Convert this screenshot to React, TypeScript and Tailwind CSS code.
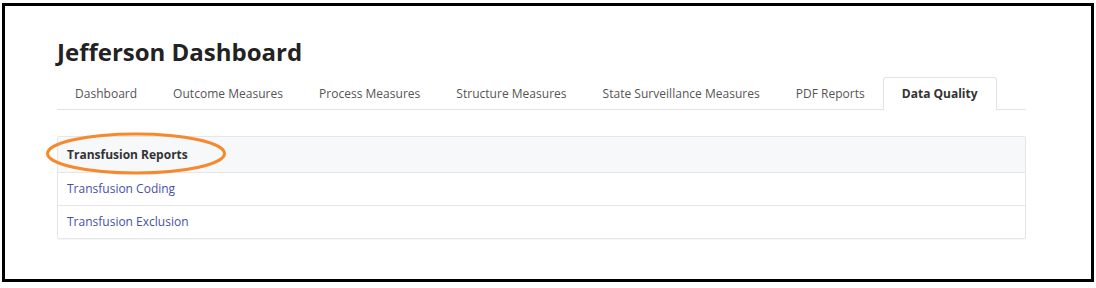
import React from "react";

const tabs = [
  "Dashboard",
  "Outcome Measures",
  "Process Measures",
  "Structure Measures",
  "State Surveillance Measures",
  "PDF Reports",
  "Data Quality",
];

export default function App() {
  return (
    <div
      className="w-[1096px] h-[288px] bg-white pt-[3px] pl-[2px]"
      style={{ fontFamily: '"Open Sans", "Liberation Sans", sans-serif' }}
    >
      <div className="relative w-[1092px] h-[279px] border-[3px] border-black bg-white">
        <div className="pl-[52px] pt-[31px] w-[1021px]">
          <h1 className="text-[24px] leading-[30px] font-bold text-[#222]">
            Jefferson Dashboard
          </h1>
          <div className="mt-[10px] flex border-b border-[#e3e3e3] h-[33px]">
            {tabs.map((t, i) => {
              const active = i === tabs.length - 1;
              return (
                <div
                  key={t}
                  className={
                    active
                      ? "px-[18px] h-[34px] -mb-px flex items-center text-[12px] font-bold text-[#333] bg-white border border-[#e3e3e3] border-b-white rounded-t-[3px]"
                      : "px-[18px] h-[33px] flex items-center text-[12px] text-[#555] tracking-[0.02px]"
                  }
                >
                  {t}
                </div>
              );
            })}
          </div>
          <div className="mt-[26px] border border-[#e6e6e6] rounded-[2px] shadow-[0_1px_1px_rgba(0,0,0,0.04)]">
            <div className="h-[36px] flex items-center px-[9px] bg-[#f7f8fa] border-b border-[#e6e6e6] text-[12px] font-bold text-[#333]">
              Transfusion Reports
            </div>
            <div className="h-[33px] flex items-center px-[9px] border-b border-[#e6e6e6] text-[12px] text-[#4651a6]">
              Transfusion Coding
            </div>
            <div className="h-[32px] flex items-center px-[9px] text-[12px] text-[#4651a6]">
              Transfusion Exclusion
            </div>
          </div>
        </div>
        <svg
          className="absolute left-[40px] top-[126px]"
          width="184"
          height="44"
          viewBox="0 0 184 44"
        >
          <ellipse cx="91" cy="21.5" rx="88.5" ry="19.5" fill="none" stroke="#f5892c" strokeWidth="3" />
        </svg>
      </div>
    </div>
  );
}
